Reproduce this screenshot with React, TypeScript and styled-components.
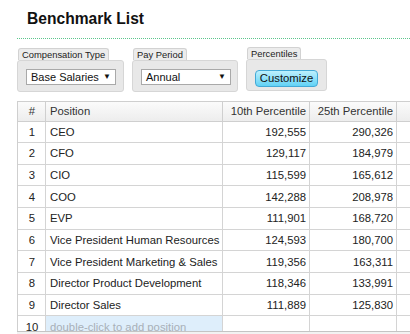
import React from 'react';
import styled, { createGlobalStyle } from 'styled-components';

const GlobalStyle = createGlobalStyle`
  html, body {
    margin: 0;
    padding: 0;
    background: #fff;
    font-family: 'Liberation Sans', Arial, sans-serif;
    color: #222;
  }
`;

type Row = {
  position: string;
  p10: string;
  p25: string;
};

const rows: Row[] = [
  { position: 'CEO', p10: '192,555', p25: '290,326' },
  { position: 'CFO', p10: '129,117', p25: '184,979' },
  { position: 'CIO', p10: '115,599', p25: '165,612' },
  { position: 'COO', p10: '142,288', p25: '208,978' },
  { position: 'EVP', p10: '111,901', p25: '168,720' },
  { position: 'Vice President Human Resources', p10: '124,593', p25: '180,700' },
  { position: 'Vice President Marketing & Sales', p10: '119,356', p25: '163,311' },
  { position: 'Director Product Development', p10: '118,346', p25: '133,991' },
  { position: 'Director Sales', p10: '111,889', p25: '125,830' },
];

const Page = styled.div`
  padding-left: 17px;
  overflow: hidden;
`;

const Title = styled.h1`
  margin: 0;
  padding: 10px 0 10px 10px;
  height: 18px;
  line-height: 18px;
  font-size: 15.6px;
  font-weight: bold;
  color: #111;
  border-bottom: 1px dotted #5cc68c;
`;

const Toolbar = styled.div`
  display: flex;
  gap: 8px;
  margin-top: 9px;
`;

const Group = styled.div<{ $width: number; $lift?: boolean }>`
  display: flex;
  flex-direction: column;
  width: ${(p) => p.$width}px;
  margin-top: ${(p) => (p.$lift ? '-1px' : '0')};
`;

const Legend = styled.div`
  align-self: flex-start;
  margin-left: 1px;
  padding: 0 3px;
  height: 11px;
  line-height: 12px;
  font-size: 9.4px;
  color: #222;
  background: #ececec;
  border: 1px solid #d2d2d2;
  border-bottom: none;
  border-radius: 3px 3px 0 0;
`;

const Box = styled.div`
  height: 32px;
  box-sizing: border-box;
  padding: 8px 0 0 8px;
  background: #e8e8e8;
  border: 1px solid #d6d6d6;
  border-radius: 3px;
`;

const Select = styled.div<{ $width: number }>`
  width: ${(p) => p.$width}px;
  height: 16px;
  box-sizing: border-box;
  display: flex;
  align-items: center;
  justify-content: space-between;
  gap: 4px;
  padding: 0 4px 0 4px;
  background: #fff;
  border: 1px solid #a9a9a9;
  font-size: 11px;
  color: #111;
  white-space: nowrap;
`;

const Arrow = styled.span`
  font-size: 8px;
  line-height: 8px;
  color: #111;
`;

const Button = styled.div`
  display: inline-flex;
  align-items: center;
  justify-content: center;
  width: 63px;
  height: 17px;
  box-sizing: border-box;
  font-size: 11.3px;
  color: #111;
  background: linear-gradient(#bdf0fd, #62d2f6);
  border: 1px solid #43a9d6;
  border-radius: 4px;
`;

const Viewport = styled.div`
  margin-top: 9px;
  height: 230px;
  overflow: hidden;
`;

const Grid = styled.div`
  display: grid;
  grid-template-columns: 28px 177px 87px 87px 120px;
  grid-template-rows: 19.5px;
  grid-auto-rows: 21.67px;
  width: max-content;
  border-top: 1px solid #cfcfcf;
  border-left: 1px solid #cfcfcf;
  font-size: 11.3px;
`;

const HeadCell = styled.div<{ $align: 'left' | 'center' | 'right' }>`
  display: flex;
  align-items: center;
  justify-content: ${(p) =>
    p.$align === 'left' ? 'flex-start' : p.$align === 'center' ? 'center' : 'flex-end'};
  padding: 0 3px 0 4px;
  background: linear-gradient(#fbfbfb, #ededed);
  border-right: 1px solid #cfcfcf;
  border-bottom: 1px solid #cfcfcf;
  color: #333;
  white-space: nowrap;
  overflow: hidden;
`;

const Cell = styled.div<{ $align: 'left' | 'center' | 'right'; $placeholder?: boolean }>`
  display: flex;
  align-items: center;
  justify-content: ${(p) =>
    p.$align === 'left' ? 'flex-start' : p.$align === 'center' ? 'center' : 'flex-end'};
  padding: 0 3px 0 4px;
  background: ${(p) => (p.$placeholder ? '#deeefb' : '#fff')};
  color: ${(p) => (p.$placeholder ? '#a8b0b8' : '#222')};
  border-right: 1px solid #d4d4d4;
  border-bottom: 1px solid #d4d4d4;
  white-space: nowrap;
  overflow: hidden;
`;

const Scrollbar = styled.div`
  height: 10px;
  background: #f2f2f2;
  border-top: 1px solid #c4c4c4;
`;

export default function App() {
  return (
    <Page>
      <GlobalStyle />
      <Title>Benchmark List</Title>
      <Toolbar>
        <Group $width={107}>
          <Legend>Compensation Type</Legend>
          <Box>
            <Select $width={90}>
              <span>Base Salaries</span>
              <Arrow>▼</Arrow>
            </Select>
          </Box>
        </Group>
        <Group $width={106}>
          <Legend>Pay Period</Legend>
          <Box>
            <Select $width={90}>
              <span>Annual</span>
              <Arrow>▼</Arrow>
            </Select>
          </Box>
        </Group>
        <Group $width={81} $lift>
          <Legend>Percentiles</Legend>
          <Box>
            <Button>Customize</Button>
          </Box>
        </Group>
      </Toolbar>
      <Viewport>
        <Grid>
          <HeadCell $align="center">#</HeadCell>
          <HeadCell $align="left">Position</HeadCell>
          <HeadCell $align="right">10th Percentile</HeadCell>
          <HeadCell $align="right">25th Percentile</HeadCell>
          <HeadCell $align="right" />
          {rows.map((r, i) => (
            <React.Fragment key={r.position}>
              <Cell $align="center">{i + 1}</Cell>
              <Cell $align="left">{r.position}</Cell>
              <Cell $align="right">{r.p10}</Cell>
              <Cell $align="right">{r.p25}</Cell>
              <Cell $align="right" />
            </React.Fragment>
          ))}
          <Cell $align="center">10</Cell>
          <Cell $align="left" $placeholder>
            double-click to add position
          </Cell>
          <Cell $align="right" />
          <Cell $align="right" />
          <Cell $align="right" />
        </Grid>
      </Viewport>
      <Scrollbar />
    </Page>
  );
}
